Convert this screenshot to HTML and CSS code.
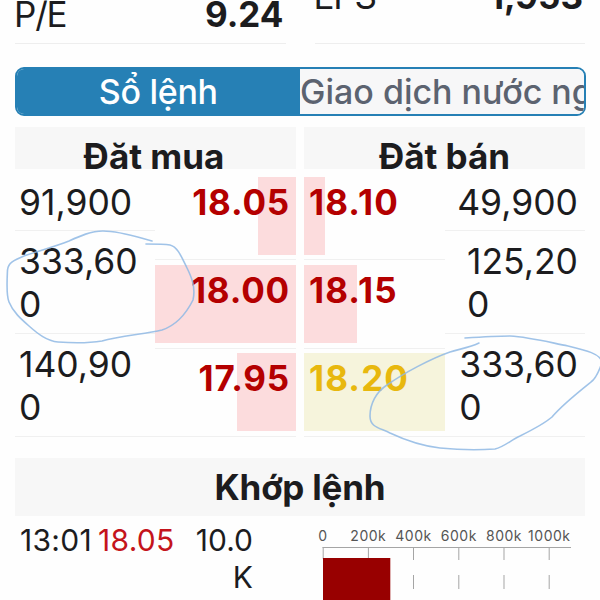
FILE: index.html
```
<!DOCTYPE html>
<html lang="vi">
<head>
  <meta charset="UTF-8">
  <title>Sổ lệnh</title>
  <link rel="stylesheet" href="styles.css">
</head>
<body>
  <div class="page">
    <div class="stats">
      <div class="stat">
        <span class="stat-label">P/E</span>
        <span class="stat-value">9.24</span>
      </div>
      <div class="stat stat-eps">
        <span class="stat-label">EPS</span>
        <span class="stat-value">1,953</span>
      </div>
    </div>

    <div class="tabs">
      <div class="tab active">Sổ lệnh</div>
      <div class="tab">Giao dịch nước ngoài</div>
    </div>

    <div class="order-book">
      <div class="side buy">
        <div class="side-title">Đặt mua</div>
        <div class="side-body">
          <div class="volumes">
            <div class="volume">91,900</div>
            <div class="volume">333,60<br>0</div>
            <div class="volume">140,90<br>0</div>
          </div>
          <div class="prices">
            <div class="price"><div class="bar" style="width: 38.5px"></div><span>18.05</span></div>
            <div class="price"><div class="bar" style="width: 141px"></div><span>18.00</span></div>
            <div class="price"><div class="bar" style="width: 59.5px"></div><span>17.95</span></div>
          </div>
        </div>
      </div>
      <div class="side sell">
        <div class="side-title">Đặt bán</div>
        <div class="side-body">
          <div class="prices">
            <div class="price"><div class="bar" style="width: 21px"></div><span>18.10</span></div>
            <div class="price"><div class="bar" style="width: 53px"></div><span>18.15</span></div>
            <div class="price ref"><div class="bar" style="width: 141px"></div><span>18.20</span></div>
          </div>
          <div class="volumes">
            <div class="volume">49,900</div>
            <div class="volume"><span>125,20<br>0</span></div>
            <div class="volume"><span>333,60<br>0</span></div>
          </div>
        </div>
      </div>
    </div>

    <div class="match-title">Khớp lệnh</div>
    <div class="match">
      <div class="trade">
        <span class="trade-time">13:01</span>
        <span class="trade-price">18.05</span>
        <span class="trade-volume">10.0<br>K</span>
      </div>
      <svg class="chart" width="285" height="100" viewBox="300 516 285 100">
        <g class="axis-labels">
          <text x="323" y="541">0</text>
          <text x="368.3" y="541">200k</text>
          <text x="413.5" y="541">400k</text>
          <text x="458.8" y="541">600k</text>
          <text x="504" y="541">800k</text>
          <text x="549.3" y="541">1000k</text>
        </g>
        <path class="axis" d="M322.5 547.5H571M323.2 547v12M368.4 547v12M413.5 547v13M458.8 547v13M504 547v13M549.2 547v13M413.5 575v14M458.8 575v14M504 575v14M549.2 575v14"/>
        <rect class="chart-bar" x="323" y="558" width="67.3" height="60"/>
      </svg>
    </div>

    <!-- hand-drawn marks -->
    <svg class="marks" width="600" height="600" viewBox="0 0 600 600">
      <path d="M152 241C137 237 120 231 103 231C91 231 80 236 69 241C54 247 35 252 24 256C14 260 8 263 7.500 270C7 281 6 295 9 302C13 312 21 319 29 326C38 334 47 341 58 342C71 343 90 343 102 341C119 336 145 334 162 330C177 325 187 312 193 300C196 287 191 276 187 268C182 258 178 247 170 245C164 244 155 244 146 244"/>
      <path d="M479 343C471 347 460 349 450 352C430 359 404 373 387 385C376 392 370 404 370 416C370 428 381 428 390 433C407 441 422 446 440 448C460 450 480 450 495 449C504 447 511 440 520 436C532 430 544 424 552 417C562 405 581 390 591 382C597 378 599 370 602 363C602 354 585 350 568 346C548 342 529 337 510 336C495 336 480 337 465 338"/>
    </svg>
  </div>
</body>
</html>
```
FILE: styles.css
```
body {
  margin: 0;
  background-color: #fefefe;
  color: #1c1c1e;
  font-family: Inter, "Liberation Sans", sans-serif;
}

.page {
  position: relative;
  box-sizing: border-box;
  width: 600px;
  height: 600px;
  padding: 0 15px;
  overflow: hidden;
}

.stats {
  display: flex;
  gap: 29px;
  height: 44px;
}

.stat {
  box-sizing: border-box;
  flex: 1;
  display: flex;
  justify-content: space-between;
  padding-right: 2px;
  border-bottom: 1px solid #eee;
  font-size: 35px;
  line-height: 29px;
}

.stat-label {
  margin-left: -1px;
  letter-spacing: -1.200px;
}

.stat-eps span {
  margin-top: -18px;
}

.stat-value {
  font-weight: 700;
}

.tabs {
  box-sizing: border-box;
  display: flex;
  height: 49px;
  margin: 22.500px -0.500px 0;
  border: 2px solid #2680b5;
  border-radius: 9px;
  overflow: hidden;
}

.tab {
  flex: 0 0 50%;
  box-sizing: border-box;
  background-color: #f7f7f8;
  color: #5c6370;
  font-size: 34px;
  font-weight: 500;
  line-height: 46px;
  white-space: nowrap;
  overflow: hidden;
}

.tab.active {
  background-color: #2680b5;
  color: #fff;
  letter-spacing: -0.300px;
  text-align: center;
}

.order-book {
  display: flex;
  gap: 8px;
  margin-top: 11px;
}

.side {
  flex: 1;
}

.side-title {
  height: 42.500px;
  margin-bottom: 3px;
  background-color: #f7f7f7;
  font-size: 35px;
  font-weight: 700;
  line-height: 58px;
  text-align: center;
  overflow: hidden;
}

.side.buy .side-title {
  padding-right: 3px;
  margin-right: 0;
}

.side-body {
  display: flex;
}

.volumes,
.prices {
  flex: 1;
}

.volume {
  padding: 8.800px 4px 6.600px;
  border-bottom: 1px solid #f0f0f0;
  font-size: 35.500px;
  line-height: 43.100px;
}

.sell .volume {
  padding-right: 7px;
  text-align: right;
}

.sell .volume span {
  display: inline-block;
  text-align: left;
}

.price {
  box-sizing: border-box;
  display: grid;
  height: 88.300px;
  padding: 4.500px 0;
  border-bottom: 1px solid #f0f0f0;
  color: #b40000;
  font-size: 35px;
  font-weight: 700;
  letter-spacing: 1.100px;
  line-height: 50px;
}

.price > * {
  grid-area: 1 / 1;
}

.price .bar {
  background-color: #fcdcdd;
}

.price span {
  padding: 0 5px;
}

.buy .price {
  justify-items: end;
}

.buy .price span {
  letter-spacing: 0.800px;
  padding-right: 6px;
}

.price.ref {
  color: #e8b80e;
}

.ref .bar {
  background-color: #f6f4dc;
}

.match-title {
  height: 58px;
  margin-top: 21px;
  background-color: #f7f7f7;
  font-size: 35px;
  font-weight: 700;
  letter-spacing: -0.200px;
  line-height: 59px;
  text-align: center;
}

.match {
  display: flex;
  justify-content: space-between;
}

.trade {
  display: flex;
  width: 233px;
  padding: 6px 0 0 5px;
  font-size: 30px;
  line-height: 37px;
}

.trade-time {
  width: 78px;
  letter-spacing: 0.300px;
}

.trade-price {
  color: #c4141c;
  letter-spacing: 0.300px;
}

.trade-volume {
  margin-left: auto;
  text-align: right;
}

.chart {
  display: block;
}

.axis-labels text {
  fill: #555;
  font-size: 14px;
  letter-spacing: 0.5px;
  text-anchor: middle;
}

.axis {
  fill: none;
  stroke: #a5a5a5;
  stroke-width: 1;
}

.chart-bar {
  fill: #980000;
}

.marks {
  position: absolute;
  top: 0;
  left: 0;
}

.marks path {
  fill: none;
  stroke: #8fb8e4;
  stroke-width: 1.600;
  stroke-linecap: round;
  opacity: 0.85;
}
```
